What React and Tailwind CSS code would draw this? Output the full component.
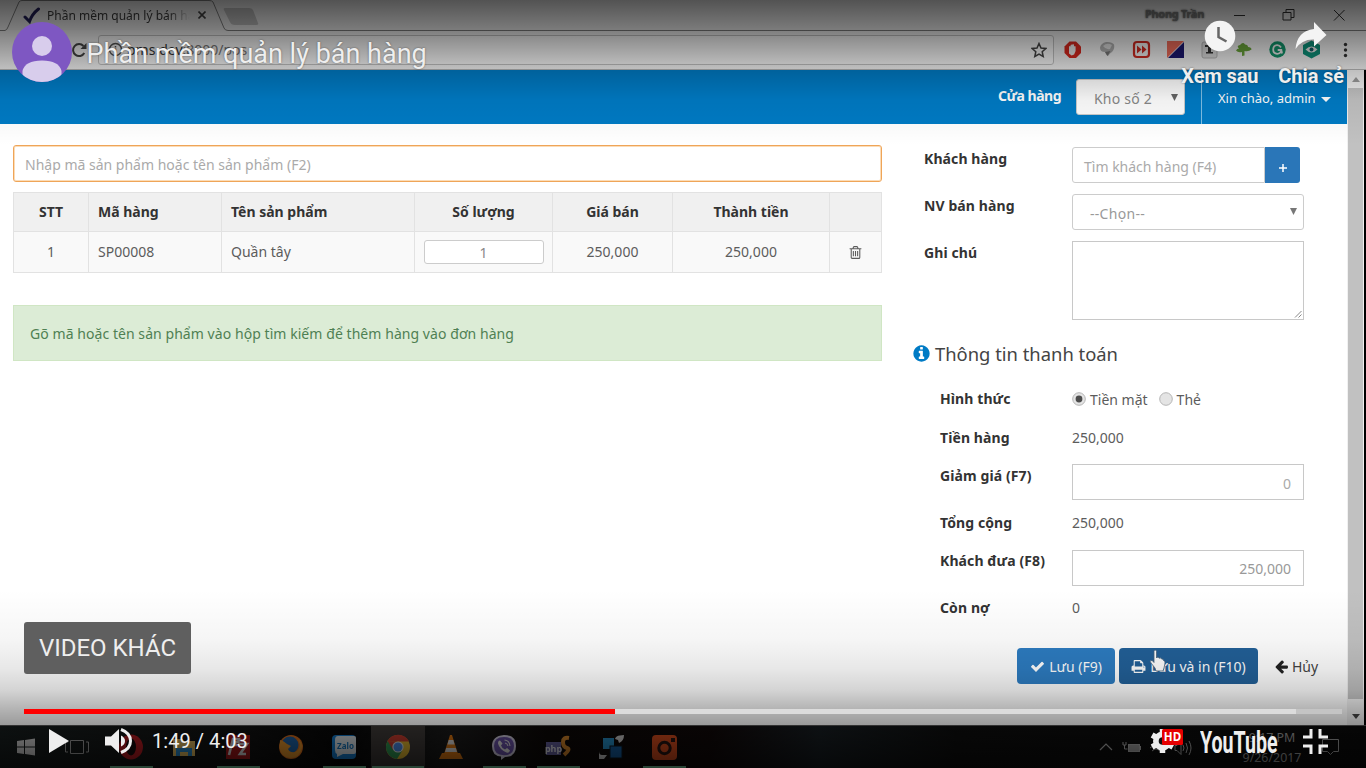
import React from "react";

const FA = {
  trash:
    "M704 736v576q0 14-9 23t-23 9h-64q-14 0-23-9t-9-23v-576q0-14 9-23t23-9h64q14 0 23 9t9 23zm256 0v576q0 14-9 23t-23 9h-64q-14 0-23-9t-9-23v-576q0-14 9-23t23-9h64q14 0 23 9t9 23zm256 0v576q0 14-9 23t-23 9h-64q-14 0-23-9t-9-23v-576q0-14 9-23t23-9h64q14 0 23 9t9 23zm128 724v-948h-896v948q0 22 7 40.5t14.5 27 10.5 8.5h832q3 0 10.5-8.5t14.5-27 7-40.5zm-672-1076h448l-48-117q-7-9-17-11h-317q-10 2-17 11zm928 32v64q0 14-9 23t-23 9h-96v948q0 83-47 143.5t-113 60.5h-832q-66 0-113-58.5t-47-141.5v-952h-96q-14 0-23-9t-9-23v-64q0-14 9-23t23-9h309l70-167q15-37 54-63t79-26h320q40 0 79 26t54 63l70 167h309q14 0 23 9t9 23z",
  check:
    "M1671 566q0 40-28 68l-724 724-136 136q-28 28-68 28t-68-28l-136-136-362-362q-28-28-28-68t28-68l136-136q28-28 68-28t68 28l294 295 656-657q28-28 68-28t68 28l136 136q28 28 28 68z",
  print:
    "M448 1536h896v-256h-896v256zm0-640h896v-384h-160q-40 0-68-28t-28-68v-160h-640v640zm1152 64q0-26-19-45t-45-19-45 19-19 45 19 45 45 19 45-19 19-45zm128 0v416q0 13-9.5 22.5t-22.5 9.5h-224v160q0 40-28 68t-68 28h-960q-40 0-68-28t-28-68v-160h-224q-13 0-22.5-9.5t-9.5-22.5v-416q0-79 56.5-135.5t135.5-56.5h64v-544q0-40 28-68t68-28h672q40 0 88 20t76 48l152 152q28 28 48 76t20 88v256h64q79 0 135.5 56.5t56.5 135.5z",
  back:
    "M1664 896v128q0 53-32.5 90.5t-84.5 37.5h-704l293 294q38 36 38 90t-38 90l-75 76q-37 37-90 37-52 0-91-37l-651-652q-37-37-37-90 0-52 37-91l651-650q38-38 91-38 52 0 90 38l75 74q38 38 38 91t-38 91l-293 293h704q52 0 84.5 37.5t32.5 90.5z",
  info:
    "M1152 1376v-160q0-14-9-23t-23-9h-96v-512q0-14-9-23t-23-9h-320q-14 0-23 9t-9 23v160q0 14 9 23t23 9h96v320h-96q-14 0-23 9t-9 23v160q0 14 9 23t23 9h448q14 0 23-9t9-23zm-128-896v-160q0-14-9-23t-23-9h-192q-14 0-23 9t-9 23v160q0 14 9 23t23 9h192q14 0 23-9t9-23zm640 416q0 209-103 385.5t-279.5 279.5-385.5 103-385.5-103-279.5-279.5-103-385.5 103-385.5 279.5-279.5 385.5-103 385.5 103 279.5 279.5 103 385.5z",
};

function Fa({ name, className }) {
  return (
    <svg viewBox="0 0 1792 1792" className={className} fill="currentColor">
      <path d={FA[name]} />
    </svg>
  );
}

/* ---------- Browser chrome ---------- */

function TabStrip() {
  return (
    <div className="relative flex h-[30px] shrink-0 bg-[#ededed]">
      <svg className="absolute left-0 top-0 h-[31px] w-[1366px]" viewBox="0 0 1366 31" fill="none">
        <path d="M0 30.5H5Q7 30 8 27L19 2Q20 .5 22 .5H209Q212 .5 213 2L224 28Q225 30.500 228 30.500H1366" stroke="#808080" />
        <path d="M225 8H249Q252 8 253 10L258 23Q259 25 256 25H235Q231 25 230 22L224 10Q223 8 225 8Z" fill="#c0c0c0" />
      </svg>
      <div className="flex h-[30px] items-center pl-[23px]">
        <svg className="h-[17px] w-[18px]" viewBox="0 0 18 17" fill="none" stroke="#23205a" strokeWidth="3" strokeLinecap="round">
          <path d="M2 10L6.500 14.500Q9 7 15.500 2" />
        </svg>
        <div className="ml-[6px] w-[143px] overflow-hidden pt-px whitespace-nowrap text-[12px] text-[#3a3a3a] [mask-image:linear-gradient(90deg,#000_85%,transparent)]">
          Phần mềm quản lý bán hàng
        </div>
        <svg className="ml-[8px] h-[8px] w-[8px]" viewBox="0 0 8 8" stroke="#444" strokeWidth="1.6">
          <path d="M.5.5l7 7M7.500.5l-7 7" />
        </svg>
      </div>
      <div className="ml-auto flex h-[29px] items-center pr-[20px]">
        <span className="text-[11px] font-bold tracking-[-0.3px] text-[#777] [text-shadow:0_0_2px_#222]">Phong Trần</span>
        <svg className="ml-[30px] h-[12px] w-[112px]" viewBox="0 0 112 12" fill="none" stroke="#333">
          <path d="M0 6.500H11M50 3.500h7v7.500h-8V3.500zM52 3V.5h8v8h-3M100 1l10.500 10.500M110.500 1L100 11.500" />
        </svg>
      </div>
    </div>
  );
}

function Extensions() {
  return (
    <svg className="h-[24px] w-[300px]" viewBox="1058 38 300 24" fill="none">
      <path d="M1069.500 41.500h6.500l5 5v6.500l-5 5h-6.500l-5-5v-6.500z" fill="#d8281e" />
      <path d="M1069 50v-3.500q1-1 1.600 0V45q1-1 1.700 0v-.5q1-1 1.700.5v1.500q1-1 1.600 0V51l-1.500 3.500-2.500 1-2.600-2z" fill="#eee" />
      <path d="M1100 47.500q1-4.500 6-5.500 6-.5 8 2.500 1 4-2 7.500-2 1-4 4-2-1-3-4-5 0-5-4.500z" fill="#aeaeae" />
      <path d="M1103 46q4-4 9-1l-2 4q-4 1-7-3z" fill="#dcdcdc" />
      <path d="M1105 52l2.500 4 3-5z" fill="#777" />
      <rect x="1134" y="42" width="15" height="15" rx="3" stroke="#cf2b22" strokeWidth="2.200" />
      <path d="M1137 45.500l4.500 4-4.500 4zM1142 45.500l4.500 4-4.500 4z" fill="#cf2b22" />
      <path d="M1167 41h17l-17 17z" fill="#ef6c5a" />
      <path d="M1184 42v16h-16z" fill="#1c1770" />
      <rect x="1202" y="42" width="15" height="16" rx="2" fill="#ddd" stroke="#b5b5b5" />
      <path d="M1205 45h9v2h-3v5h2v1.500h-7V52h2v-5h-3z" fill="#333" />
      <path d="M1242 56v-4q-4 1-6-1.500 1-2 3-2-3-3 1-3.500 3-3.500 5-.5 3 0 3 2.500 3.500 0 3.500 2.500-3 2.500-7 1.500v4.500z" fill="#6aa53a" />
      <circle cx="1277.500" cy="49.500" r="8.200" fill="#12956b" />
      <path d="M1281 47.500q-1.500-2.500-4-2.300-3.800.5-3.800 4.300 0 4 4 4.300 3.500 0 4-3.800h-3.500M1281.500 50.500l.5 3" stroke="#eee" strokeWidth="1.800" />
      <path d="M1311.500 40.500l8.500 4.500v9l-8.500 4.500-8.500-4.500v-9z" fill="#0d937b" />
      <path d="M1305.500 49.500q6-6 12 0-6 6-12 0z" fill="#eee" />
      <circle cx="1311.500" cy="49.500" r="2" fill="#14606a" />
      <g fill="#333">
        <circle cx="1345.500" cy="44.500" r="1.700" />
        <circle cx="1345.500" cy="50" r="1.700" />
        <circle cx="1345.500" cy="55.500" r="1.700" />
      </g>
    </svg>
  );
}

function Toolbar() {
  return (
    <div className="flex h-[40px] shrink-0 items-center border-b border-[#b5b5b5] bg-[#f2f2f2]">
      <svg className="ml-[71px] h-[16px] w-[16px]" viewBox="0 0 16 16" fill="none" stroke="#444" strokeWidth="2">
        <path d="M13.300 11A6 6 0 1 1 12.500 4" />
        <path d="M15.500 1v6h-6z" fill="#444" stroke="none" />
      </svg>
      <div className="ml-[11px] flex h-[30px] w-[956px] items-center rounded-[3px] border border-[#c0c0c0] bg-[#f7f7f7] pl-[9px]">
        <svg className="h-[15px] w-[15px]" viewBox="0 0 15 15" fill="none" stroke="#555" strokeWidth="1.500">
          <circle cx="7.500" cy="7.500" r="6" />
          <path d="M7.500 6.500v4.500M7.500 4v1.500" />
        </svg>
        <span className="ml-[4px] text-[14px] text-[#777]">
          <span className="text-[#333]">pms.dev</span>:8000/pos
        </span>
        <svg className="ml-auto mr-[6px] h-[16px] w-[16px]" viewBox="0 0 16 16" fill="none" stroke="#444" strokeWidth="1.500">
          <path d="M8 1.500l2 4.500 4.800.5-3.600 3.200 1 4.800L8 12l-4.200 2.500 1-4.800L1.200 6.500 6 6z" />
        </svg>
      </div>
      <div className="ml-[4px]">
        <Extensions />
      </div>
    </div>
  );
}

function Scrollbar() {
  return (
    <div className="flex w-[18px] shrink-0 flex-col items-center border-r border-black bg-[#f1f1f1]">
      <div className="flex h-[18px] items-center">
        <svg className="h-[5px] w-[8px]" viewBox="0 0 8 5" fill="#999"><path d="M0 5L4 0l4 5z" /></svg>
      </div>
      <div className="h-[611px] w-[15px] bg-[#c1c1c1]" />
      <div className="flex flex-1 items-center">
        <svg className="mt-[9px] h-[5px] w-[8px]" viewBox="0 0 8 5" fill="#444"><path d="M0 0h8L4 5z" /></svg>
      </div>
    </div>
  );
}

/* ---------- Shop application ---------- */

function AppHeader() {
  return (
    <div className="flex h-[54px] shrink-0 bg-[#007bc5] text-white">
      <div className="mt-[15px] ml-auto text-[14px] leading-[22px] font-bold tracking-[-0.5px]">Cửa hàng</div>
      <div className="mt-[9px] ml-[15px] flex h-[36px] w-[109px] items-center rounded-[3px] border border-[#ccc] bg-white pl-[17px] text-[14px] text-[#888]">
        <span className="pt-[2px] tracking-[0.2px]">Kho số 2</span>
        <svg className="ml-auto mr-[6px] h-[7px] w-[7px]" viewBox="0 0 7 7" fill="#666"><path d="M0 0h7L3.500 7z" /></svg>
      </div>
      <div className="ml-[16px] flex w-[146px] border-l border-[#7fc0e6] pt-[17px] pl-[16px] text-[13px] leading-[22px]">
        <span>Xin chào, admin</span>
        <svg className="mt-[10px] ml-[5px] h-[5px] w-[10px]" viewBox="0 0 10 5" fill="#fff"><path d="M0 0h10L5 5z" /></svg>
      </div>
    </div>
  );
}

const TH = "border border-[#e2e2e2] font-bold";
const TD = "border border-[#e2e2e2] p-0";

function OrderTable() {
  return (
    <table className="mt-[10px] w-[868px] table-fixed border-collapse text-[14px] leading-[20px] text-[#5c5c5c]">
      <colgroup>
        <col className="w-[75px]" />
        <col className="w-[133px]" />
        <col className="w-[193px]" />
        <col className="w-[138px]" />
        <col className="w-[120px]" />
        <col className="w-[157px]" />
        <col className="w-[52px]" />
      </colgroup>
      <thead>
        <tr className="h-[39px] bg-[#f0f0f0] text-[#333]">
          <th className={TH}>STT</th>
          <th className="border border-[#e2e2e2] pl-[9px] text-left font-bold">Mã hàng</th>
          <th className="border border-[#e2e2e2] pl-[9px] text-left font-bold">Tên sản phẩm</th>
          <th className={TH}>Số lượng</th>
          <th className={TH}>Giá bán</th>
          <th className={TH}>Thành tiền</th>
          <th className={TH} />
        </tr>
      </thead>
      <tbody>
        <tr className="h-[41px] bg-[#f9f9f9] text-center">
          <td className={TD}>1</td>
          <td className="border border-[#e2e2e2] pl-[9px] text-left">SP00008</td>
          <td className="border border-[#e2e2e2] pl-[9px] text-left">Quần tây</td>
          <td className={TD}>
            <div className="mx-auto h-[24px] w-[120px] rounded-[3px] border border-[#ccc] bg-white pt-px text-[14px] leading-[22px] text-[#888]">1</div>
          </td>
          <td className={TD}>250,000</td>
          <td className={TD}>250,000</td>
          <td className={TD}><Fa name="trash" className="mx-auto h-[15px] w-[15px]" /></td>
        </tr>
      </tbody>
    </table>
  );
}

function FormRow({ label, className, children }) {
  return (
    <div className={className}>
      <div className="shrink-0 grow text-[14px] leading-[22px] font-bold tracking-[0.1px] text-[#333]">{label}</div>
      <div className="w-[232px] shrink-0">{children}</div>
    </div>
  );
}

function Radio({ checked }) {
  return (
    <svg className="h-[14px] w-[14px]" viewBox="0 0 14 14">
      <circle cx="7" cy="7" r="6.300" fill="#e4e4e4" stroke="#b5b5b5" />
      {checked && <circle cx="7" cy="7" r="3.400" fill="#4c4c4c" />}
    </svg>
  );
}

function OrderForm() {
  return (
    <div className="ml-[30px] w-[392px] pt-[24px] text-[14px] text-[#5c5c5c]">
      <FormRow label="Khách hàng" className="flex h-[47px] pl-[12px]">
        <div className="mt-[-1px] flex h-[36px] w-[228px]">
          <div className="flex-1 rounded-l-[3px] border border-[#ccc] pt-[2px] pl-[11px] leading-[34px] text-[#aaa]">Tìm khách hàng (F4)</div>
          <div className="flex w-[35px] items-center justify-center rounded-r-[3px] bg-[#2a76b8] text-white">
            <svg className="mt-[5px] h-[8px] w-[8px]" viewBox="0 0 8 8" stroke="#fff" strokeWidth="1.500"><path d="M4 0v8M0 4h8" /></svg>
          </div>
        </div>
      </FormRow>
      <FormRow label="NV bán hàng" className="flex h-[46px] pl-[12px]">
        <div className="mt-[-1px] flex h-[36px] items-center rounded-[3px] border border-[#ccc] pr-[6px] pl-[17px] text-[#999]">
          <span className="pt-[3px] tracking-[0.3px]">--Chọn--</span>
          <svg className="ml-auto mb-[2px] h-[7px] w-[7px]" viewBox="0 0 7 7" fill="#777"><path d="M0 0h7L3.500 7z" /></svg>
        </div>
      </FormRow>
      <FormRow label="Ghi chú" className="flex h-[101px] pt-px pl-[12px]">
        <div className="mt-[-1px] flex h-[79px] items-end justify-end border border-[#c8c8c8] p-px">
          <svg className="h-[8px] w-[8px]" viewBox="0 0 8 8" stroke="#888"><path d="M1 7.500L7.500 1M4.500 7.500l3-3" /></svg>
        </div>
      </FormRow>
      <div className="flex h-[46px] items-start text-[18.400px] leading-[24px] text-[#444]">
        <Fa name="info" className="mt-[2px] mr-[4px] h-[19px] w-[19px] text-[#007bc5]" />
        Thông tin thanh toán
      </div>
      <FormRow label="Hình thức" className="flex h-[39px] pl-[28px]">
        <div className="flex leading-[24px]">
          <span className="mt-[4px]"><Radio checked /></span>
          <span className="ml-[4px]">Tiền mặt</span>
          <span className="mt-[4px] ml-[11px]"><Radio /></span>
          <span className="ml-[4px]">Thẻ</span>
        </div>
      </FormRow>
      <FormRow label="Tiền hàng" className="flex h-[38px] pl-[28px]">
        <div className="leading-[22px]">250,000</div>
      </FormRow>
      <FormRow label="Giảm giá (F7)" className="flex h-[47px] pl-[28px]">
        <div className="mt-[-1px] h-[36px] border border-[#c8c8c8] pt-[3px] pr-[12px] text-right leading-[32px] text-[#aaa]">0</div>
      </FormRow>
      <FormRow label="Tổng cộng" className="flex h-[38px] pl-[28px]">
        <div className="leading-[22px]">250,000</div>
      </FormRow>
      <FormRow label="Khách đưa (F8)" className="flex h-[47px] pl-[28px]">
        <div className="h-[36px] border border-[#c8c8c8] pt-[2px] pr-[12px] text-right leading-[32px] text-[#999]">250,000</div>
      </FormRow>
      <FormRow label="Còn nợ" className="flex h-[51px] pl-[28px]">
        <div className="leading-[22px]">0</div>
      </FormRow>
      <div className="ml-[105px] flex h-[36px] w-[330px] items-stretch whitespace-nowrap">
        <div className="mr-[4px] flex w-[98px] items-center justify-center gap-[4px] rounded-[4px] bg-[#2d7cc1] text-[14px] text-white">
          <Fa name="check" className="h-[15px] w-[15px]" />
          <span className="pt-px">Lưu (F9)</span>
        </div>
        <div className="relative flex w-[139px] items-center justify-center gap-[4px] rounded-[4px] bg-[#226098] text-[14px] text-white">
          <Fa name="print" className="h-[15px] w-[15px]" />
          <span className="pt-px">Lưu và in (F10)</span>
          <svg className="absolute top-[1px] left-[30px] h-[24px] w-[18px]" viewBox="0 0 18 24">
            <path d="M5 2.500Q5 1 6.200 1T7.500 2.500V9q.5-1 1.500-.8t1 1q2-1 2.500.8 2-.5 2 1.500Q16.500 12 16 14l-1 5-1 3H7l-1-3-4-5Q.5 12 2 11.500T5 13.500z" fill="#fff" stroke="#48637c" strokeWidth=".8" />
          </svg>
        </div>
        <div className="ml-[16px] flex items-center gap-[3px] text-[#444]">
          <Fa name="back" className="h-[15px] w-[15px] text-[#222]" />
          <span className="pt-px">Hủy</span>
        </div>
      </div>
    </div>
  );
}

/* ---------- Desktop taskbar ---------- */

const ICONS = [
  { id: "opera", open: true, art: <><ellipse cx="13" cy="13" rx="12" ry="12.500" fill="#c01b22" /><ellipse cx="13" cy="13" rx="5" ry="8.500" fill="#16090b" /></> },
  { id: "explorer", art: <><path d="M2 5h9l2 2h11v15H2z" fill="#e8c060" /><path d="M5 22v-8h16v8h-4v-4H9v4z" fill="#2b8fd0" /></> },
  { id: "filezilla", open: true, art: <><path d="M1 1h24v24H1z" fill="#a91518" /><path d="M4 21L8 5h6l-.6 3H10l-.8 3H12M13 10h9l-7 10h6" stroke="#ddd" strokeWidth="2.600" fill="none" /></> },
  { id: "firefox", art: <><circle cx="13" cy="13" r="12" fill="#e6731c" /><circle cx="12" cy="11" r="8.500" fill="#1f66ad" /><path d="M2 6q4 1 7 4l4 2-3 3q2 4 7 3 5-2 5-8l-2-5q5 4 4 9-2 10-12 10Q3 23 1.500 14z" fill="#ee9a2c" /></> },
  { id: "zalo", open: true, art: <><rect x="1" y="1" width="24" height="24" rx="4" fill="#1583d8" /><path d="M7 2h16q2 0 2 2v14q0 2-2 2H12l-6 3V20q-2-1-2-4V6q0-4 3-4z" fill="#e6eef2" /><text x="14.500" y="14.500" textAnchor="middle" fontSize="8" fontWeight="700" fill="#167ac4" fontFamily="Noto Sans, sans-serif">Zalo</text></> },
  { id: "chrome", open: true, active: true, art: <><circle cx="13" cy="13" r="12" fill="#e9bd2e" /><path d="M13 13L2.600 7A12 12 0 0 0 12 25l5-8z" fill="#2b9a52" /><path d="M2.600 7A12 12 0 0 1 23.800 7.500H13z" fill="#d23b2e" /><path d="M2.600 7L8 16l5-8.500z" fill="#d23b2e" /><circle cx="13" cy="13" r="5.600" fill="#eee" /><circle cx="13" cy="13" r="4.500" fill="#4a8df0" /></> },
  { id: "vlc", art: <><path d="M4 19h18l3 6H1z" fill="#e87c11" /><path d="M12 1h2l6 19q-7 3-14 0z" fill="#e87c11" /><path d="M10.700 6h4.600l1.300 4.500H9.400zM8.200 14h9.600l1.200 4H7z" fill="#e5e5e5" /></> },
  { id: "viber", open: true, art: <><path d="M13 1q12 0 12 11T14 23l-4 3v-3.500Q1 22 1 12T13 1z" fill="#ddd8ee" /><path d="M13 3q10 0 10 9t-10 9.300Q3 21 3 12t10-9z" fill="#6f56b0" /><path d="M9 6.500l2.500 3-1.500 2q1 3 4 4l2-1.500 3 2.500q-1 3-3.500 2-7-3-8.500-9 0-3 2-3z" fill="#eee" /><path d="M13.500 6q5 .5 5.500 6M14 9q2.500.5 3 3" fill="none" stroke="#eee" strokeWidth="1.100" /></> },
  { id: "phpstorm", open: true, art: <><rect x="1" y="8" width="15" height="13" fill="#6863a2" /><text x="8.500" y="17.500" textAnchor="middle" fontSize="9" fontWeight="700" fill="#e6e6ee" fontFamily="Noto Sans, sans-serif">php</text><path d="M24 4q-6-1-6 4t4 6-3 7" stroke="#dc8a2c" strokeWidth="4" fill="none" /></> },
  { id: "windows-tool", art: <><rect x="5" y="4" width="11" height="11" fill="#2794cf" /><rect x="12" y="12" width="12" height="12" fill="#1560a5" stroke="#0a1720" /><path d="M17 5q1-3.500 5-3.500l4-.5q0 6-5 8l-1-3zM1 17q0 4 3 4h5l-3 4H1z" fill="#d5d5d5" /></> },
  { id: "camera", open: true, art: <><rect x="1" y="1" width="25" height="25" rx="4" fill="#e1501f" /><circle cx="13.500" cy="14" r="5.700" fill="none" stroke="#281513" strokeWidth="3" /><rect x="20" y="4" width="4" height="4" fill="#281513" /></> },
];

function Taskbar() {
  return (
    <div className="flex h-[43px] shrink-0 border-t border-[#555] bg-[linear-gradient(90deg,#161c1c_0,#101010_18%,#060606_25%,#191919_33%,#0b0706_40%,#0f0808_52%,#161c20_60%,#0d0d0d_70%,#0a0a0a_100%)]">
      <div className="flex w-[105px] items-center pl-[17px]">
        <svg className="h-[18px] w-[74px]" viewBox="0 0 74 18">
          <path d="M0 3l7-1v6.500H0zM8 2l10-1.500v8H8zM0 9.500h7V16l-7-1zM8 9.500h10v8L8 16z" fill="#c8c8c8" />
          <path d="M53.500 2.500h13v13h-13zM51 4h-2.500v10H51M69 4h2.500v10H69" fill="none" stroke="#999" />
        </svg>
      </div>
      {ICONS.map((it) => (
        <div key={it.id} className={it.active ? "flex w-[53.300px] flex-col items-center bg-[#3b3735]" : "flex w-[53.300px] flex-col items-center"}>
          <svg className="mt-[8px] h-[27px] w-[27px] opacity-90" viewBox="0 0 27 27">{it.art}</svg>
          {it.open && <div className={it.active ? "mt-auto h-[2px] w-[52px] bg-[#7fd0a4]" : "mt-auto h-[2px] w-[43px] bg-[#7fd0a4]"} />}
        </div>
      ))}
      <div className="ml-auto flex items-center text-[#999]">
        <svg className="h-[20px] w-[96px]" viewBox="1098 736 96 20" fill="none" stroke="#aaa">
          <path d="M1101 749l6-6 6 6" strokeWidth="1.200" />
          <rect x="1129.500" y="743.500" width="11" height="7" fill="#999" />
          <path d="M1124 741v3h3v-3M1125.500 744v4h3M1141.500 745v4" />
          <path d="M1151 747q6-6 12 0M1153 750q4-4 8 0" />
          <path d="M1176 744.500h2l4-4v13l-4-4h-2zM1184 744q2 3 0 6M1187 742q3 5 0 10M1190 740q4 7 0 14" />
        </svg>
        <div className="ml-[43px] w-[72px] pt-px text-center text-[12.400px] leading-[20px]">
          <div>9:17 PM</div>
          <div>9/26/2017</div>
        </div>
        <svg className="mr-[27px] ml-[14px] h-[18px] w-[17px]" viewBox="0 0 17 18" fill="none" stroke="#999"><path d="M.5 1.500h16v12h-5l-3 3-3-3h-5z" /></svg>
      </div>
    </div>
  );
}

/* ---------- Video player controls ---------- */

function PlayerOverlay() {
  return (
    <div className="absolute inset-0 flex flex-col bg-[linear-gradient(180deg,rgba(0,0,0,.65)_0,rgba(0,0,0,.48)_30px,rgba(0,0,0,.22)_68px,rgba(0,0,0,.06)_100px,rgba(0,0,0,0)_145px,rgba(0,0,0,0)_590px,rgba(0,0,0,.04)_640px,rgba(0,0,0,.09)_668px,rgba(0,0,0,.17)_690px,rgba(0,0,0,.29)_708px,rgba(0,0,0,.39)_724px,rgba(0,0,0,.68)_768px)] font-['Roboto',sans-serif] text-[#eee]">
      <div className="flex h-[90px] pl-[12px]">
        <svg className="mt-[22px] h-[60px] w-[60px]" viewBox="0 0 60 60">
          <defs><clipPath id="avatar"><circle cx="30" cy="30" r="30" /></clipPath></defs>
          <g clipPath="url(#avatar)">
            <path d="M0 0h60v60H0z" fill="#7e57c2" />
            <circle cx="30" cy="24" r="10" fill="#d8cdec" />
            <path d="M10.500 60V49Q13 38.500 30 38.500T49.500 49v11z" fill="#d8cdec" />
          </g>
        </svg>
        <div className="mt-[37px] ml-[14.500px] text-[27px] leading-[34px] whitespace-nowrap [text-shadow:0_0_2px_rgba(0,0,0,.5)]">Phần mềm quản lý bán hàng</div>
        <div className="mt-[20px] ml-auto flex gap-[20px] pr-[22px] text-[20px] leading-[24px] font-bold tracking-[-0.100px] [text-shadow:0_0_2px_rgba(0,0,0,.5)]">
          <div className="flex flex-col items-center">
            <svg className="mb-[12px] h-[32px] w-[32px]" viewBox="0 0 32 32">
              <circle cx="16" cy="16" r="15.300" fill="#f4f4f4" />
              <path d="M14.500 7v10l8 4.500" fill="none" stroke="#666" strokeWidth="2.500" />
            </svg>
            Xem sau
          </div>
          <div className="flex flex-col items-center">
            <svg className="mb-[12px] h-[32px] w-[32px]" viewBox="0 0 32 32">
              <path d="M19 2l12.500 13L19 26.500V19.500Q7 19 .5 29 2 11 19 9z" fill="#f4f4f4" />
            </svg>
            Chia sẻ
          </div>
        </div>
      </div>
      <div className="mt-auto ml-[24px] flex h-[52px] w-[167px] items-center justify-center rounded-[3px] bg-[#5f5f5f] text-[24px] whitespace-nowrap">VIDEO KHÁC</div>
      <div className="mx-[24px] mt-[35px] flex h-[5px] bg-[#c4c4c4]">
        <div className="w-[591px] bg-[#f00]" />
        <div className="w-[681px] bg-[#dcdcdc]" />
      </div>
      <div className="flex h-[54px] items-center">
        <svg className="ml-[49px] h-[24px] w-[20px]" viewBox="0 0 20 24" fill="#eee"><path d="M0 0l20 12L0 24z" /></svg>
        <svg className="ml-[36px] h-[26px] w-[27px]" viewBox="0 0 27 26" fill="#eee">
          <path d="M0 8.500h6L14 1v24L6 17.500H0zM16 7.500q4 2 4 5.500t-4 5.500z" />
          <path d="M16 1.500Q25.500 5 25.500 13T16 24.500" fill="none" stroke="#eee" strokeWidth="3" />
        </svg>
        <span className="ml-[20px] pb-px text-[20px] tracking-[0.050px]">1:49 / 4:03</span>
        <svg className="ml-auto h-[28px] w-[36px]" viewBox="0 0 36 28">
          <circle cx="13.500" cy="14" r="6.500" fill="none" stroke="#eee" strokeWidth="6" />
          <path d="M13.500 2v24M3.100 8l20.800 12M3.100 20L23.900 8" stroke="#eee" strokeWidth="5.500" />
          <circle cx="13.500" cy="14" r="3.800" fill="#111" />
          <rect x="13" y="2" width="21" height="16" rx="1.500" fill="#e60000" />
          <text x="23.500" y="14" textAnchor="middle" fontSize="11.500" fontWeight="700" fill="#fff" fontFamily="Open Sans, sans-serif">HD</text>
        </svg>
        <svg className="ml-[15px] h-[34px] w-[80px]" viewBox="0 0 80 34" fill="#eee">
          <text x="0" y="28.500" fontSize="32" fontWeight="700" fontFamily="Roboto, sans-serif" textLength="77.500" lengthAdjust="spacingAndGlyphs">YouTube</text>
        </svg>
        <svg className="mr-[38px] ml-[23px] h-[25px] w-[25px]" viewBox="0 0 25 25" fill="none" stroke="#eee" strokeWidth="3">
          <path d="M0 8H8V0M17 0V8H25M0 17H8V25M25 17H17V25" />
        </svg>
      </div>
    </div>
  );
}

export default function App() {
  return (
    <div className="relative flex h-[768px] w-[1366px] flex-col overflow-hidden bg-black font-['Noto_Sans','Open_Sans',sans-serif]">
      <TabStrip />
      <Toolbar />
      <div className="flex h-[655px] shrink-0 pr-px">
        <div className="flex min-w-0 flex-1 flex-col bg-white">
          <AppHeader />
          <div className="flex">
            <div className="ml-[13px] w-[869px] shrink-0 pt-[21px]">
              <div className="h-[37px] rounded-[3px] border border-[#efa558] pt-[2px] pl-[11px] text-[14px] leading-[34px] text-[#aaa] shadow-[inset_0_0_0_1px_#fbdcb8]">Nhập mã sản phẩm hoặc tên sản phẩm (F2)</div>
              <OrderTable />
              <div className="mt-[32px] h-[56px] border border-[#d0e6c4] bg-[#dcecd6] pt-px pl-[16px] text-[14px] leading-[53px] tracking-[0.060px] text-[#4f8053]">
                Gõ mã hoặc tên sản phẩm vào hộp tìm kiếm để thêm hàng vào đơn hàng
              </div>
            </div>
            <OrderForm />
          </div>
        </div>
        <Scrollbar />
      </div>
      <Taskbar />
      <PlayerOverlay />
    </div>
  );
}
